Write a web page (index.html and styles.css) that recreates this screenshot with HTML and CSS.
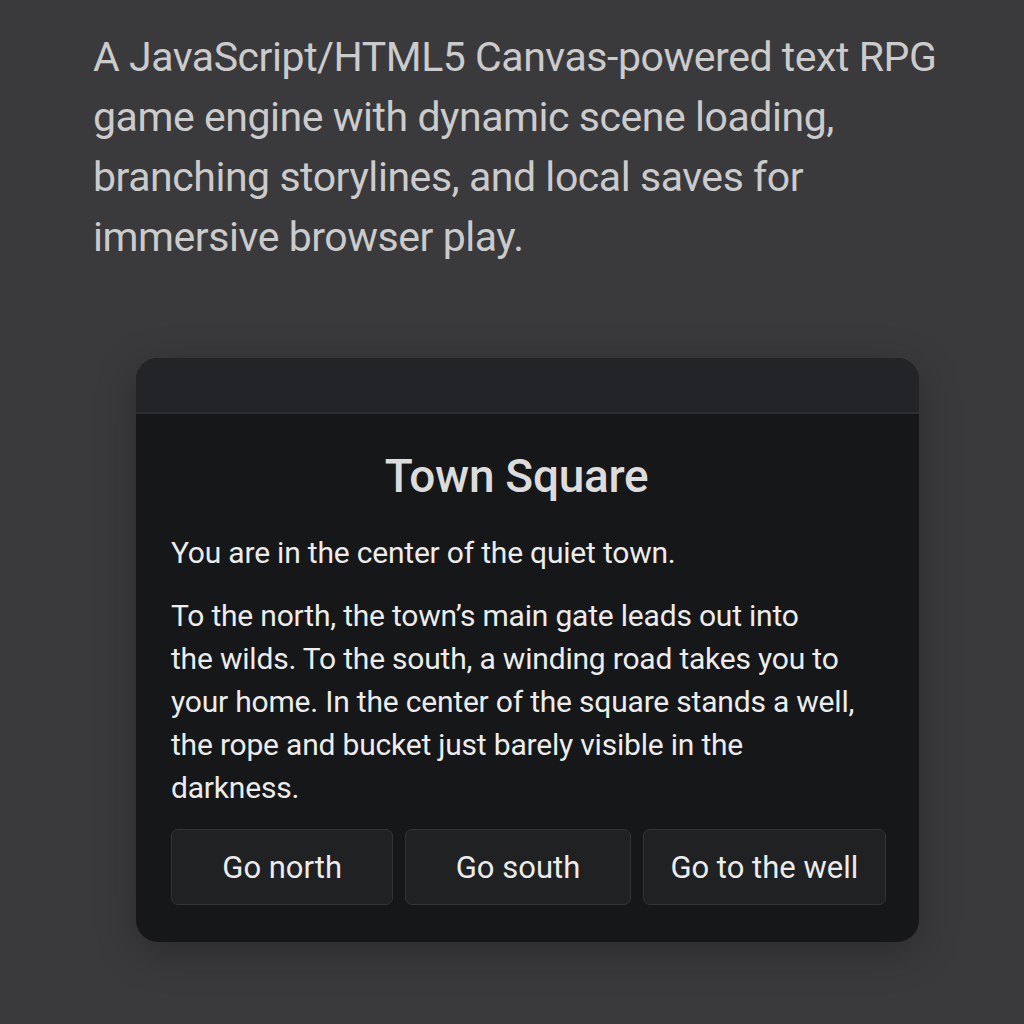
FILE: index.html
```html
<!DOCTYPE html>
<html lang="en">
<head>
<meta charset="utf-8">
<link rel="stylesheet" href="styles.css">
</head>
<body>
<main class="page">
  <p class="intro">A JavaScript/HTML5 Canvas-powered text RPG<br>game engine with dynamic scene loading,<br>branching storylines, and local saves for<br>immersive browser play.</p>
  <section class="game">
    <div class="game-bar"></div>
    <div class="game-body">
      <h1 class="scene-title">Town Square</h1>
      <p class="scene-text">You are in the center of the quiet town.</p>
      <p class="scene-text">To the north, the town’s main gate leads out into<br>the wilds. To the south, a winding road takes you to<br>your home. In the center of the square stands a well,<br>the rope and bucket just barely visible in the<br>darkness.</p>
      <div class="choices">
        <button class="choice">Go north</button>
        <button class="choice">Go south</button>
        <button class="choice">Go to the well</button>
      </div>
    </div>
  </section>
</main>
</body>
</html>
```

FILE: styles.css
```css
* { box-sizing: border-box; }
html, body {
  margin: 0;
  padding: 0;
  height: 100%;
}
body {
  background: #3a3a3c;
  font-family: Roboto, "Noto Sans", "Liberation Sans", sans-serif;
  color: #e6e6e6;
}
.page {
  padding: 27px 40px 0 93px;
}
.intro {
  margin: 0;
  font-size: 41px;
  line-height: 60px;
  letter-spacing: -0.45px;
  color: #cbcbcc;
  font-weight: 400;
  white-space: nowrap;
}
.game {
  margin: 91px 0 0 43px;
  width: 783px;
  border-radius: 22px;
  overflow: hidden;
  background: #161718;
  box-shadow: 0 10px 40px rgba(0,0,0,0.25);
}
.game-bar {
  height: 56px;
  background: #232427;
  border-bottom: 2px solid #2c2d30;
}
.game-body {
  padding: 33px 33px 37px 35px;
}
.scene-title {
  margin: 0 0 26px;
  padding-right: 24px;
  text-align: center;
  font-size: 46px;
  font-weight: 500;
  letter-spacing: -0.3px;
  color: #dcdcdc;
  line-height: 58px;
}
.scene-text {
  margin: 0 0 20px;
  font-size: 30px;
  line-height: 43px;
  letter-spacing: -0.2px;
  color: #ececec;
  white-space: nowrap;
}
.choices {
  margin-top: 1px;
  display: grid;
  grid-template-columns: 222fr 225fr 243fr;
  gap: 12px;
}
.choice {
  height: 76px;
  background: #202123;
  border: 1.5px solid #333437;
  border-radius: 7px;
  color: #ececec;
  font-family: inherit;
  font-size: 31px;
  padding: 0;
}
```
